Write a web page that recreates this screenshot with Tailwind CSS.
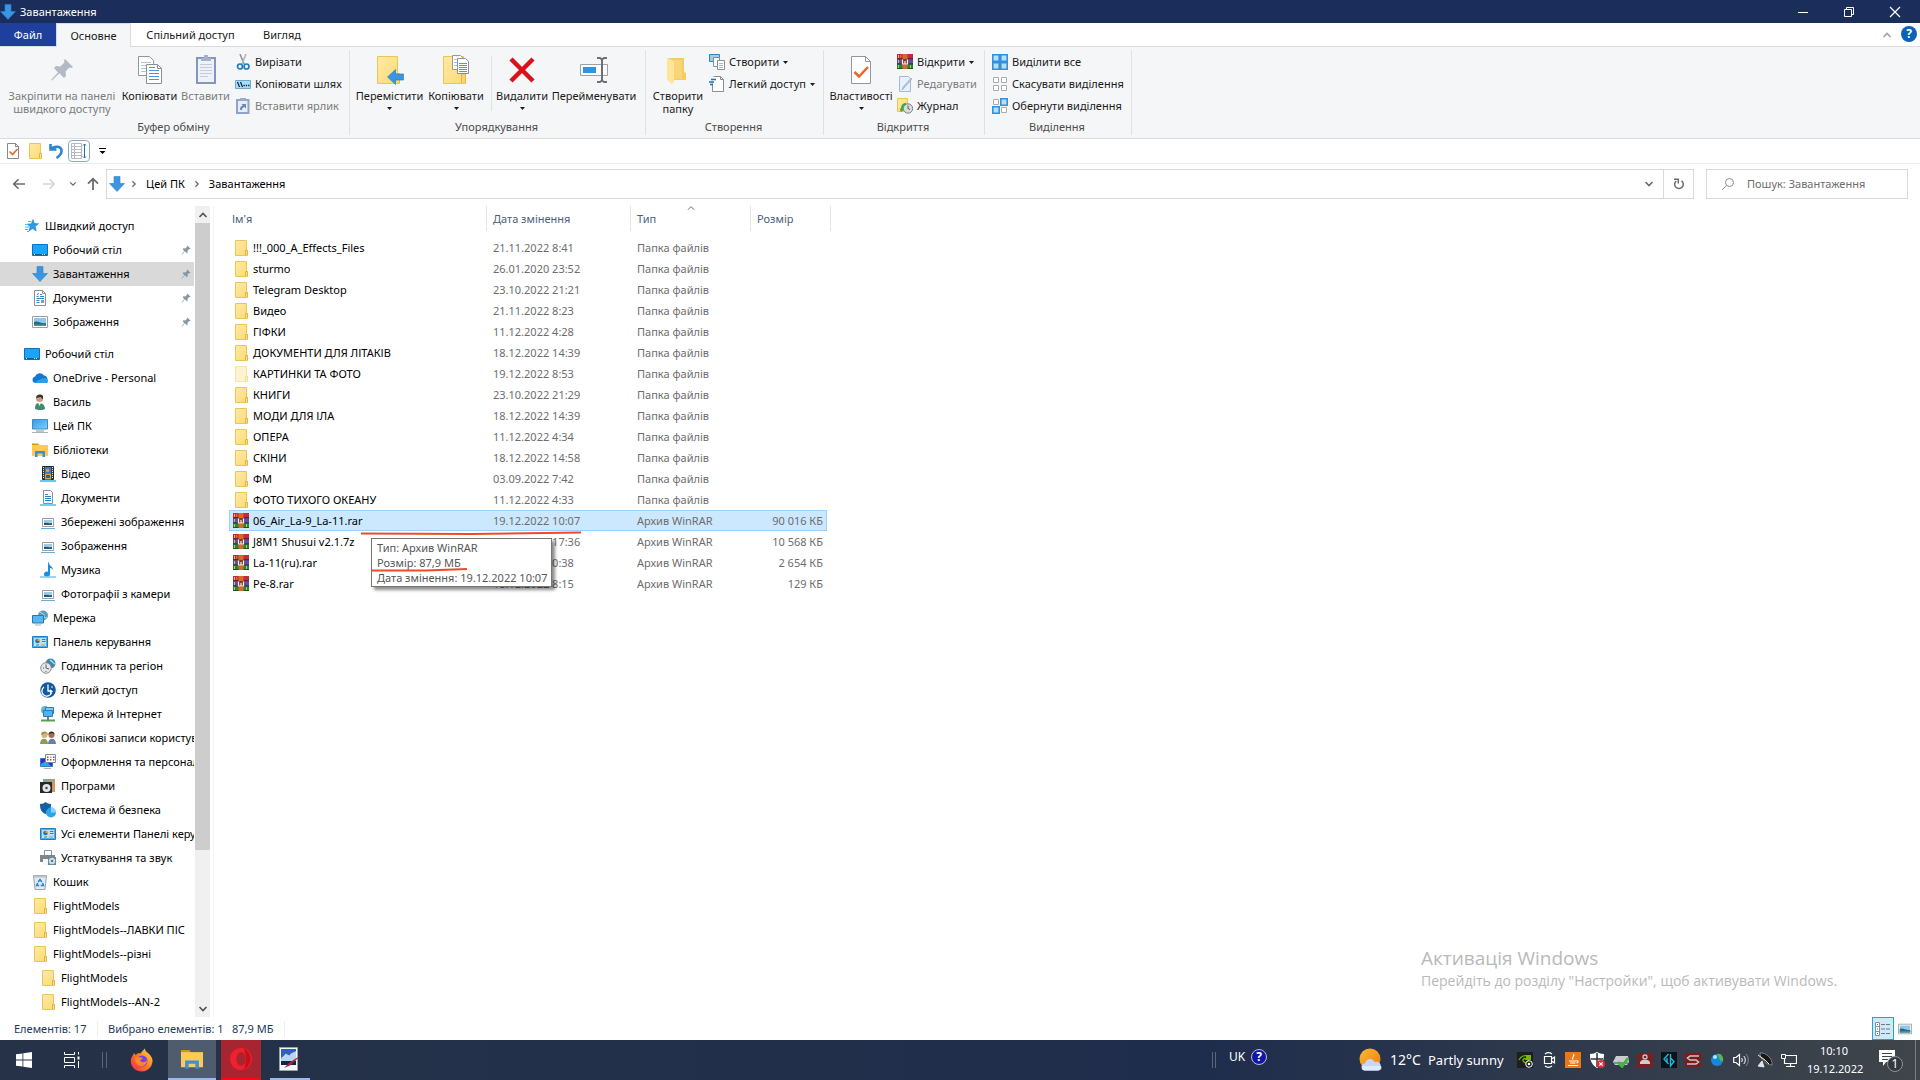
<!DOCTYPE html>
<html lang="uk">
<head>
<meta charset="utf-8">
<title>Завантаження</title>
<script src="https://cdn.jsdelivr.net/npm/@tailwindcss/browser@4"></script>
</head>
<body class="flex h-screen flex-col overflow-hidden bg-white font-['Noto_Sans','Open_Sans',sans-serif] text-[11px] leading-4 text-[#1a1a1a]">
<svg class="absolute size-0" aria-hidden="true">
  <defs>
    <linearGradient id="gf" x1="0" x2="1" y1="0" y2="1"><stop offset="0" stop-color="#ffeaa6"/><stop offset="1" stop-color="#fbda74"/></linearGradient>
    <linearGradient id="gs" x1="0" x2="1" y1="0" y2="1"><stop offset="0" stop-color="#fbb834"/><stop offset="1" stop-color="#f07c12"/></linearGradient>
    <linearGradient id="gx" x1="1" x2="0" y1="0" y2="1"><stop offset="0" stop-color="#ffe23c"/><stop offset=".5" stop-color="#ff7a22"/><stop offset="1" stop-color="#f0245c"/></linearGradient>
    <linearGradient id="gm" x1="0" x2="1" y1="0" y2="1"><stop offset="0" stop-color="#2c9cf0"/><stop offset="1" stop-color="#7fd0fb"/></linearGradient>
  </defs>
  <symbol id="down" viewBox="0 0 16 16"><path d="M5 .5h6v7h4.500L8 15.500.5 7.500H5z" fill="#3a96e2" stroke="#2f7fc6" stroke-width=".6"/></symbol>
  <symbol id="folder" viewBox="0 0 16 16"><path d="M2.500.5h11v10h1v5h-12z" fill="url(#gf)" stroke="#ecc557"/><path d="M12.500 15v-4.500h2V15" fill="#fbe08a" stroke="#e3b640"/></symbol>
  <symbol id="folderl" viewBox="0 0 16 16"><path d="M2.500.5h11v10h1v5h-12z" fill="#fdf3d0" stroke="#f6e4ac"/><path d="M12.500 15v-4.500h2V15" fill="#fdf3d0" stroke="#f3dc98"/></symbol>
  <symbol id="rar" viewBox="0 0 16 16"><path fill="#c22a44" d="M0 0h16v5H0z"/><path fill="#5751a8" d="M0 5h16v5H0z"/><path fill="#218a38" d="M0 10h16v5H0z"/><path fill="#5d1326" d="M0 4.300h16v.9H0z"/><path fill="#241f55" d="M0 9.500h16v.9H0z"/><path fill="#0c4417" d="M0 14.300h16V15H0z"/><path fill="#e2b93c" d="M1 1h1v3H1zM1 6h1v3H1zM1 11h1v3H1zM3.500 1h.6v3h-.6zM13 11h1v3h-1z"/><path fill="#d8682a" d="M5.500 0h5v15h-5z"/><path fill="#8d3a1a" d="M4.600 5h6.800v5.500H4.600z"/><path d="M5.500 5.500v4.500h5V5.500M8 7v3" stroke="#f2f2f2" fill="none" stroke-width="1.200"/></symbol>
  <symbol id="star" viewBox="0 0 16 16"><path d="M9 1.500l1.300 4 4.200.2-3.300 2.800 1 4.500-3.700-2.500L5 13l1.200-4.500L3 6.200l4.300-.4z" fill="#2e9bea" stroke="#1b7cc9" stroke-width=".6"/><path d="M4 3.500h3M1 6.500h3M1 9h4M1 11.500h3M3 13.500h2" stroke="#56b6f2"/></symbol>
  <symbol id="desk" viewBox="0 0 16 16"><path d="M.5 2.500h15v11H.5z" fill="#1ba4fb" stroke="#0b6fbb"/><path d="M1 12.500h14" stroke="#075c9e"/><path d="M2 12.500h2M10 12.500h4" stroke="#cfe9fb" stroke-dasharray="1 1"/></symbol>
  <symbol id="doc" viewBox="0 0 16 16"><path d="M2.500.5h8l3 3v12h-11z" fill="#fff" stroke="#8b8f94"/><path d="M10.500.5v3h3" fill="none" stroke="#8b8f94"/><path d="M4.500 6.500h2M5 4.500l2-1M8 4.500h2M8 6.500h4M4.500 8.500h7.500M4.500 10.500h3M4.500 12.500h3" stroke="#2785c9"/><path d="M9 10h3v3H9z" fill="#7c9db8"/></symbol>
  <symbol id="pic" viewBox="0 0 16 16"><path d="M.5 2.500h15v11H.5z" fill="#fff" stroke="#9aa0a6"/><path d="M2 4h12v8H2z" fill="#8cc8f2"/><path d="M2 8c4-2 6 2 12 1v3H2z" fill="#2f6a65"/><path d="M2 10.500h12V12H2z" fill="#4a8ec0"/></symbol>
  <symbol id="cloud" viewBox="0 0 16 16"><path d="M3.500 13a3.300 3.300 0 01-.4-6.500A5 5 0 0112 5.500 3.900 3.900 0 0113 13z" fill="#1377d4"/><path d="M2.500 13c0 0 6-5 8.500-4.500 3-1.500 5 .5 5 2.500s-1 2-2 2z" fill="#2ba0ea"/></symbol>
  <symbol id="user" viewBox="0 0 16 16"><circle cx="7.500" cy="4.500" r="3.500" fill="#c99f78"/><path d="M4 4C4 0 9.500-.5 11 2v3.500L8.500 3z" fill="#3a3531"/><path d="M3 15c0-4 1-6 4-6s6 2 6 6c-2 1.500-7 1.500-10 0z" fill="#3f8b74"/><path d="M6 9l1.500 3L9 9z" fill="#e8efe9"/></symbol>
  <symbol id="pc" viewBox="0 0 16 16"><path d="M.5 1.500h15v9.500H.5z" fill="url(#gm)" stroke="#4b87b4"/><path d="M4 13h8" stroke="#7b8d9c"/><path d="M0 14.500h16" stroke="#a8b6c2"/></symbol>
  <symbol id="lib" viewBox="0 0 16 16"><path d="M0 1.500h6l1.500 2H0z" fill="#d9930f"/><path d="M0 3h16v11H0z" fill="#fbcb55"/><path d="M3 15V9h10v6h-2.500v-3.500h-5V15z" fill="#3b90d8"/></symbol>
  <symbol id="film" viewBox="0 0 16 16"><path d="M2.500.5h11v13h-11z" fill="#38434d" stroke="#20272e"/><path d="M5 1h6v6H5z" fill="#3d7ac2"/><path d="M5 7.500h6v6H5z" fill="#e0a33d"/><path d="M6 3h3v3H6z" fill="#e89a2c"/><path d="M6 9h4v3H6z" fill="#355c93"/><path d="M3.500 1v12M12.500 1v12" stroke="#dfe5ea" stroke-dasharray="1 1"/><path d="M0 15h16" stroke="#3cb1f2" stroke-width="1.500"/></symbol>
  <symbol id="docl" viewBox="0 0 16 16"><path d="M3.500.5h7l2 2v11h-9z" fill="#fff" stroke="#8b8f94"/><path d="M5 4.500h3M5 6.500h6M5 8.500h6M5 10.500h6" stroke="#2785c9"/><path d="M0 15h16" stroke="#5cb4e6" stroke-width="1.500"/></symbol>
  <symbol id="picl" viewBox="0 0 16 16"><path d="M2.500 4.500h11v8h-11z" fill="#fff" stroke="#9aa0a6"/><path d="M4 6h8v5H4z" fill="#9ccbed"/><path d="M4 9c3-1 5 1 8 0v2H4z" fill="#2f5a65"/><path d="M1 14.500h14" stroke="#5cb4e6"/></symbol>
  <symbol id="note" viewBox="0 0 16 16"><path d="M8.500 0c.5 4 5 4.500 4.500 8.500-.5-2-2-2.500-3-2.500v6a3 2.500 0 11-2-2.300V0z" fill="#1a8fe0"/><path d="M0 15h16" stroke="#5cb4e6" stroke-width="1.200"/></symbol>
  <symbol id="net" viewBox="0 0 16 16"><circle cx="11" cy="5.500" r="5" fill="#5a9fb8"/><path d="M8 2c2 2 4 1 4 4s2 2 3 1" stroke="#bfe3ea" fill="none"/><path d="M.5 5.500h11v7.500H.5z" fill="#55b6f4" stroke="#2b77ad"/><path d="M3 15h6" stroke="#9bb0c0"/></symbol>
  <symbol id="cpl" viewBox="0 0 16 16"><path d="M.5 2.500h15v11H.5z" fill="#b7e1f8" stroke="#1e7dbd"/><path d="M1.500 3.500h13v9h-13z" fill="none" stroke="#4cb1e8"/><circle cx="5.500" cy="7" r="2.300" fill="#2673b8"/><path d="M5.500 7V4.500A2.500 2.500 0 018 7z" fill="#f5a623"/><path d="M10 5.500h3.500M10 7.500h3.500M4 11h3" stroke="#2a88c8"/><path d="M9 11h4" stroke="#f08c1c"/></symbol>
  <symbol id="clock" viewBox="0 0 16 16"><circle cx="10.500" cy="5.500" r="5" fill="#3f86ad"/><path d="M10 2c2 1 3 3 5 4" stroke="#aad6e8" stroke-width="1.500"/><circle cx="6" cy="10" r="5.300" fill="#e4e6e8" stroke="#8b9094"/><path d="M6 6.500V10l3 1M3 10h1M6 13v1" stroke="#596066" fill="none"/></symbol>
  <symbol id="ease" viewBox="0 0 16 16"><circle cx="8" cy="8" r="7.800" fill="#14599f"/><path d="M8 2.500V9h4M4 5a5 5 0 107.500 6M10 8l2 1.500-2 1.500" stroke="#fff" stroke-width="1.300" fill="none"/><circle cx="12" cy="5" r=".8" fill="#fff"/></symbol>
  <symbol id="inet" viewBox="0 0 16 16"><circle cx="5" cy="4" r="4" fill="#69b7d0"/><path d="M5.500 1.500h8v6h-8z" fill="#79cbf8" stroke="#2a7db7"/><path d="M3.500 4.500h9v6h-9z" fill="#4db4f2" stroke="#2a7db7"/><path d="M1 14.500h14" stroke="#48a84b" stroke-width="2"/><path d="M8 11v4" stroke="#777" stroke-width="2"/></symbol>
  <symbol id="users" viewBox="0 0 16 16"><circle cx="4.500" cy="5" r="3" fill="#d4b483"/><path d="M1 5c0-5 7-4.500 7 0L6 3z" fill="#a08c4c"/><circle cx="11.500" cy="5" r="3" fill="#a07050"/><path d="M8.500 4.500c0-4 6-4 6 0L12 3z" fill="#3b2a20"/><path d="M0 14c0-7 8-7 8 0z" fill="#8a9a5d"/><path d="M8 14c0-7 8-7 8 0z" fill="#6880a4"/></symbol>
  <symbol id="pers" viewBox="0 0 16 16"><path d="M.5 4.500h12v8H.5z" fill="#4520d8" stroke="#2b7fc0"/><path d="M1 10l5-3 5 5H1z" fill="#29a6ee"/><path d="M5.500.5h10v8h-10z" fill="#fff" stroke="#7f8b95"/><path d="M7 2.500h1.500v1.500H7zM13 5h1.500v1.500H13z" fill="#e23c3c"/><path d="M10 2.500h1.500v1.500H10z" fill="#f0a020"/><path d="M13 2.500h1.500v1.500H13zM7 5h1.500v1.500H7z" fill="#6a35c8"/><path d="M10 5h1.500v1.500H10z" fill="#2a9d4a"/><path d="M4 14.500h7" stroke="#a9b6c0"/></symbol>
  <symbol id="prog" viewBox="0 0 16 16"><path d="M3 1h12v13H3z" fill="#8ba88e"/><path d="M11 1l4 3v9l-2 1z" fill="#d9955c"/><path d="M0 4h12v11H0z" fill="#26292b"/><circle cx="6.500" cy="10" r="4" fill="#e3e5e6"/><circle cx="6.500" cy="10" r="1.300" fill="#4c5357"/></symbol>
  <symbol id="shield" viewBox="0 0 16 16"><path d="M0 2c3 0 4-1 5.500-2C7 1 8.500 2 11 2c0 6-1 8-5.500 10C1 10 0 7 0 2z" fill="#155fa5"/><circle cx="11" cy="10.500" r="5" fill="#2aa5ec"/><path d="M11 10.500V5.500a5 5 0 015 5z" fill="#8fd4f8"/></symbol>
  <symbol id="print" viewBox="0 0 16 16"><path d="M4.500.5h7v5h-7z" fill="#fff" stroke="#8d9499"/><path d="M0 5h15v7H0z" fill="#7e878d"/><path d="M3 9h5v6H3z" fill="#f4f6f8"/><path d="M8 7h8v8H8z" fill="#6a8496"/><circle cx="12" cy="11" r="3.200" fill="#c8dce8"/><circle cx="12" cy="11" r="1.100" fill="#556"/></symbol>
  <symbol id="bin" viewBox="0 0 16 16"><path d="M1.500 1.500h13l-1.500 14H3z" fill="#e4e9ed" stroke="#9aa5ad"/><path d="M2 2.500h12" stroke="#b8c2ca" stroke-width="2"/><path d="M6.200 8L8 5.500 9.800 8M10.500 9l1 2.500H8.700M7.200 11.500H4.600L5.600 9" stroke="#2484cf" stroke-width="1.500" fill="none"/></symbol>
  <symbol id="pin" viewBox="0 0 12 12"><path d="M7.500.5L11.500 4.500 10.500 5l-.8-.2L7.800 6.800 8 9 7 10 4.700 7.600 1 11.300.5 11 4 7.200 2 5l1-1 2.200.2L7.200 2.300 7 1.300z" fill="#8695a3"/></symbol>
  <symbol id="copy" viewBox="0 0 26 30"><path d="M1.500 1.500h11l4 4v15h-15z" fill="#fff" stroke="#93989d"/><path d="M4 7.500h10M4 10.500h10M4 13.500h10M4 16.500h10" stroke="#a3c5ee"/><path d="M9.500 9.500h11l4 4v15h-15z" fill="#fff" stroke="#8a8f94"/><path d="M20.500 9.500v4h4" fill="none" stroke="#8a8f94"/><path d="M12 15.500h10M12 18.500h10M12 21.500h10M12 24.500h10M12 12.500h6" stroke="#4c93ea"/></symbol>
  <symbol id="paste" viewBox="0 0 22 30"><path d="M2 3h18v25H2z" fill="#eef2f8" stroke="#8297bb" stroke-width="2"/><path d="M6 3h10v3H6zM9 0h4v4H9z" fill="#a3b1c9"/><path d="M5 9.500h12M5 12.500h12M5 15.500h12M5 18.500h12M5 21.500h8" stroke="#c3cddd"/></symbol>
  <symbol id="scis" viewBox="0 0 16 16"><path d="M5 0l4 10" stroke="#8c949b" stroke-width="1.600"/><path d="M11 0L7 10" stroke="#b0b7bd" stroke-width="1.600"/><circle cx="5" cy="12.500" r="2.500" fill="none" stroke="#1e7dc4" stroke-width="1.700"/><circle cx="11.500" cy="12.500" r="2.500" fill="none" stroke="#1e7dc4" stroke-width="1.700"/></symbol>
  <symbol id="path" viewBox="0 0 16 16"><path d="M.5 4.500h15v8H.5z" fill="#a8dcfb" stroke="#6fa9d0"/><path d="M2.500 6l2 5M5.500 6l2 5" stroke="#123" stroke-width="1.200"/><path d="M8.500 9.500h6" stroke="#123" stroke-width="1.500" stroke-dasharray="1.300 1"/></symbol>
  <symbol id="lnk" viewBox="0 0 16 16"><path d="M2 2h11.500v13H2z" fill="#e6edf7" stroke="#8ea4c8" stroke-width="2"/><path d="M5 0h6v3H5z" fill="#9aabc8"/><path d="M5 12c0-3 1-4 3-4.500L6.500 6H11v4.500L9.500 9C8 9.500 7 10 7 12z" fill="#6c86b5"/></symbol>
  <symbol id="bf" viewBox="0 0 28 30"><path d="M1.500 1.500h20v17h2v10h-22z" fill="url(#gf)" stroke="#ecc557"/><path d="M19.500 28V19h4v9" fill="#fad66f" stroke="#e3b640"/></symbol>
  <symbol id="bmove" viewBox="0 0 28 30"><use href="#bf"/><path d="M11.500 22l8-7.500v4.500h8v6h-8v4.500z" fill="#3a96e2" stroke="#2f7fc6" stroke-width=".7"/></symbol>
  <symbol id="bcopy" viewBox="0 0 28 30"><use href="#bf"/><path d="M10.500.5h8l3 3v11h-11z" fill="#fff" stroke="#93989d"/><path d="M12 4.500h7M12 7.500h7M12 10.500h7" stroke="#a3c5ee"/><path d="M15.500 3.500h8l3 3v12h-11z" fill="#fff" stroke="#8a8f94"/><path d="M17 8.500h8M17 10.500h8M17 12.500h8M17 14.500h8M17 16.500h8" stroke="#4c93ea"/></symbol>
  <symbol id="del" viewBox="0 0 28 30"><path d="M3 4l22 22M25 4L3 26" stroke="#da1118" stroke-width="4.500"/></symbol>
  <symbol id="ren" viewBox="0 0 28 30"><path d="M.5 9.500h27v11H.5z" fill="#fff" stroke="#9aa0a5"/><path d="M3 12h13v6H3z" fill="#2f93e6"/><path d="M17 3h3l2 1.500L24 3h3M17 27h3l2-1.500 2 1.500h3M22 4v22" stroke="#6c7074" stroke-width="2" fill="none"/></symbol>
  <symbol id="bnew" viewBox="0 0 28 30"><path d="M4 3h16v14l2 1v7H4z" fill="#f6cb62"/><path d="M3 3l7 3v21l-2 2-5-4z" fill="#fde59a"/><path d="M10 5h8v19h-8z" fill="#f9d675"/></symbol>
  <symbol id="cr" viewBox="0 0 16 16"><path d="M.5.5h10v7H.5z" fill="#9fcde8" stroke="#2f85b8"/><path d="M4.500 3.500h6v9h-6z" fill="#fff" stroke="#8a8f94"/><path d="M8.500 6.500h7v9h-7z" fill="#fff" stroke="#8a8f94"/><path d="M10 9.500h4M10 11.500h4M10 13.500h4" stroke="#9fb8d8"/></symbol>
  <symbol id="ea" viewBox="0 0 16 16"><path d="M4.500.5h7l3 3v12h-11v-8" fill="#fff" stroke="#8a8f94"/><path d="M11.500.5v3h3" fill="none" stroke="#8a8f94"/><path d="M2 3.500h5M0 6h5M1 8.500h3" stroke="#1e6fb5" stroke-width="1.300"/></symbol>
  <symbol id="prop" viewBox="0 0 22 30"><path d="M1.500 1.500h14l5 5v22h-19z" fill="#fff" stroke="#93989d"/><path d="M15.500 1.500v5h5" fill="none" stroke="#93989d"/><path d="M4.500 17l4.500 4.500 9-9.500" stroke="#ee6326" stroke-width="2.500" fill="none"/></symbol>
  <symbol id="edit" viewBox="0 0 16 16"><path d="M2.500.5h9l2 2v13h-11z" fill="#e8f0fa" stroke="#a5b9d6"/><path d="M15 3l-8 9-2 2 1-3 8-9z" fill="#b9c9de" stroke="#8ea4c4" stroke-width=".6"/></symbol>
  <symbol id="hist" viewBox="0 0 16 16"><path d="M.5.500h10v13H.5z" fill="url(#gf)" stroke="#ecc557"/><circle cx="11" cy="10.500" r="4.700" fill="#d9dcde" stroke="#7c8287"/><path d="M11 7.500v3l2 1" stroke="#555" fill="none"/><path d="M9 5c-3 0-5 2-5 6l-1.500-1L4 14l3-2.500L5.800 11C6 8 7 7 9 7z" fill="#37a93c"/></symbol>
  <symbol id="sa" viewBox="0 0 16 16"><path d="M.8.8h6.400v6.400H.8zM8.800.8h6.400v6.400H8.800zM.8 8.800h6.400v6.400H.8zM8.800 8.800h6.400v6.400H8.800z" fill="#b5e0fc" stroke="#3390dd" stroke-width="1.600"/></symbol>
  <symbol id="sn" viewBox="0 0 16 16"><path d="M1.500 1.500h5v5h-5zM9.500 1.500h5v5h-5zM1.500 9.500h5v5h-5zM9.500 9.500h5v5h-5z" fill="#fff" stroke="#a9adb1"/></symbol>
  <symbol id="si" viewBox="0 0 16 16"><path d="M1.500 1.500h5v5h-5zM9.500 9.500h5v5h-5z" fill="#fff" stroke="#a9adb1"/><path d="M8.800.8h6.400v6.400H8.800zM.8 8.800h6.400v6.400H.8z" fill="#b5e0fc" stroke="#3390dd" stroke-width="1.600"/></symbol>
  <symbol id="caret" viewBox="0 0 5 3"><path d="M0 0h5L2.500 3z" fill="currentColor"/></symbol>
  <symbol id="chev" viewBox="0 0 10 10"><path d="M1.500 3L5 6.500 8.500 3" fill="none" stroke="currentColor" stroke-width="1.600"/></symbol>
</svg>

<header class="flex h-[23px] shrink-0 items-center bg-[#1b2d5b] text-white">
  <svg class="size-4"><use href="#down"/></svg>
  <h1 class="ml-1">Завантаження</h1>
  <div class="ml-auto flex">
    <button aria-label="Згорнути" class="flex h-5 w-[46px] items-center justify-center"><svg class="size-3" viewBox="0 0 12 12"><path d="M1 6.500h10" stroke="#fff"/></svg></button>
    <button aria-label="Відновити" class="flex h-5 w-[46px] items-center justify-center"><svg class="size-3" viewBox="0 0 12 12"><path d="M1.500 3.500h7v7h-7zM3.500 3V1.500h7v7H9" fill="none" stroke="#fff"/></svg></button>
    <button aria-label="Закрити" class="flex h-5 w-[46px] items-center justify-center"><svg class="size-3" viewBox="0 0 12 12"><path d="M1 1l10 10M11 1L1 11" stroke="#fff" stroke-width="1.200"/></svg></button>
  </div>
  <span class="w-0.5"></span>
</header>

<nav class="flex h-6 shrink-0 border-b border-[#dadbdc] bg-white" aria-label="Вкладки стрічки">
  <button class="h-[23px] w-14 bg-[#1e3f9b] text-white">Файл</button>
  <button class="relative z-10 h-6 w-[75px] border-x border-t border-[#dadbdc] bg-[#f5f6f7]">Основне</button>
  <button class="h-[23px] w-[119px]">Спільний доступ</button>
  <button class="h-[23px] w-16">Вигляд</button>
  <button aria-label="Згорнути стрічку" class="ml-auto flex w-7 items-center justify-center text-gray-400"><svg class="size-2.5 rotate-180"><use href="#chev"/></svg></button>
  <button aria-label="Довідка" class="mr-[3px] mt-[3px] size-4 rounded-full bg-[#0a63b8] text-[12px] font-bold leading-4 text-white">?</button>
</nav>

<section class="flex h-[92px] shrink-0 border-b border-[#dadbdc] bg-[#f5f6f7] py-[3px]" id="ribbon" aria-label="Стрічка"></section>

<div class="flex h-[25px] shrink-0 items-center border-b border-[#ececec] pl-[5px]">
  <button aria-label="Властивості" class="flex w-[22px]"><svg class="size-4" viewBox="0 0 16 16"><path d="M2.500.5h8l3 3v12h-11z" fill="#fff" stroke="#85898d"/><path d="M10.500.5v3h3" fill="none" stroke="#85898d"/><path d="M4.500 8.500l3 3 5-5.500" fill="none" stroke="#ee6326" stroke-width="1.600"/></svg></button>
  <button aria-label="Нова папка" class="flex w-[22px]"><svg class="size-4"><use href="#folder"/></svg></button>
  <button aria-label="Скасувати" class="flex w-[19px]"><svg class="h-4 w-3.5" viewBox="0 0 14 16"><path d="M1.500 1v5.500h6M2 6C5 2.500 12.500 3 12.500 8c0 3.500-2 5-5 7" fill="none" stroke="#2f84cc" stroke-width="2.600"/></svg></button>
  <button aria-label="Перейменувати" class="flex h-[22px] w-[22px] items-center justify-center rounded-sm border border-[#8ba8cf]"><svg class="size-4" viewBox="0 0 16 16"><path d="M.5.500h10v15H.5zM.5 3.500h10M.5 6.500h10M.5 9.500h10M.5 12.500h10M3.500.5v15" fill="none" stroke="#b4bac0"/><path d="M13.500 1v14M12 2.500L13.500 1 15 2.500M12 13.500l1.500 1.500 1.500-1.500" stroke="#2a6fa8" fill="none"/></svg></button>
  <button aria-label="Настроїти панель швидкого доступу" class="flex w-6 justify-center"><svg class="h-2 w-[7px]" viewBox="0 0 7 8"><path d="M0 1.500h7" stroke="#000"/><path d="M.5 4h6L3.500 7z"/></svg></button>
</div>

<div class="flex h-[42px] shrink-0 items-start pt-[5px] pr-3 text-[#6b6b6b]">
  <div class="flex h-[30px] w-[106px] shrink-0 items-center pl-3">
    <button aria-label="Назад" class="w-[30px]"><svg class="h-3 w-3.5" viewBox="0 0 14 12"><path d="M13 6H2M6.500 1.200L1.700 6l4.800 4.800" fill="none" stroke="currentColor" stroke-width="1.600"/></svg></button>
    <button aria-label="Вперед" class="w-[27px] text-gray-300"><svg class="h-3 w-3.5" viewBox="0 0 14 12"><path d="M1 6h11M7.500 1.200L12.300 6l-4.800 4.800" fill="none" stroke="currentColor" stroke-width="1.600"/></svg></button>
    <button aria-label="Останні розташування" class="w-[18px]"><svg class="size-2"><use href="#chev"/></svg></button>
    <button aria-label="Вгору" class="w-4"><svg class="h-3.5 w-3" viewBox="0 0 12 14"><path d="M6 13V2M1 6.700L6 1.700l5 5" fill="none" stroke="currentColor" stroke-width="1.800"/></svg></button>
  </div>
  <div class="flex h-[30px] min-w-0 grow items-center border border-[#d9d9d9] pl-0.5">
    <svg class="size-4"><use href="#down"/></svg>
    <svg class="ml-[5px] size-2 -rotate-90"><use href="#chev"/></svg>
    <a href="#" class="ml-2 text-black">Цей ПК</a>
    <svg class="ml-2 size-2 -rotate-90"><use href="#chev"/></svg>
    <a href="#" class="ml-2 text-black">Завантаження</a>
    <button aria-label="Попередні розташування" class="ml-auto flex w-7 justify-center"><svg class="size-2.5"><use href="#chev"/></svg></button>
    <button aria-label="Оновити" class="flex h-[28px] w-[30px] items-center justify-center border-l border-[#d9d9d9]"><svg class="size-3" viewBox="0 0 12 12"><path d="M8.500 2.800A4.300 4.300 0 113.200 3M1 1.200h4.300v4.300" fill="none" stroke="currentColor" stroke-width="1.500"/></svg></button>
  </div>
  <label class="ml-3 flex h-[30px] w-[202px] shrink-0 items-center border border-[#d9d9d9] pl-3.5">
    <svg class="size-3.5" viewBox="0 0 14 14"><circle cx="8.500" cy="5.500" r="4" fill="none" stroke="#8a8a8a"/><path d="M5.500 8.500L1 13" stroke="#8a8a8a"/></svg>
    <input type="search" aria-label="Пошук" placeholder="Пошук: Завантаження" class="ml-3 w-40 outline-none placeholder:text-[#6d6d6d]">
  </label>
</div>

<main class="relative flex min-h-0 grow">
  <nav class="w-[195px] shrink-0 overflow-hidden pt-2 text-black" id="tree" aria-label="Область переходів"></nav>
  <div class="flex w-[15px] shrink-0 flex-col items-center bg-[#f0f0f0] text-[#505050]">
    <button aria-label="Вгору" class="flex h-[17px] items-center"><svg class="size-2.5 rotate-180"><use href="#chev"/></svg></button>
    <div class="w-full grow-[627] bg-[#cdcdcd]"></div>
    <div class="w-full grow-[150]"></div>
    <button aria-label="Вниз" class="flex h-[17px] items-center"><svg class="size-2.5"><use href="#chev"/></svg></button>
  </div>
  <div class="relative ml-[3px] grow border-l border-[#f3f3f3] pl-[15px]">
    <table class="w-[598px] table-fixed border-separate border-spacing-0 text-[#6d6d6d]">
      <colgroup><col class="w-[258px]"><col class="w-36"><col class="w-[120px]"><col></colgroup>
      <thead>
        <tr class="h-[25px] text-left text-[#4c607a]">
          <th class="border-r border-[#e5e5e5] pl-[3px] font-normal">Ім'я</th>
          <th class="border-r border-[#e5e5e5] pl-1.5 font-normal">Дата змінення</th>
          <th class="relative border-r border-[#e5e5e5] pl-1.5 font-normal" aria-sort="ascending">Тип<svg class="absolute left-14 top-0 h-1 w-2" viewBox="0 0 8 4"><path d="M.5 4L4 .7 7.500 4" fill="none" stroke="#777"/></svg></th>
          <th class="relative pl-1.5 font-normal">Розмір<span class="absolute inset-y-0 -right-1 w-px bg-[#e5e5e5]"></span></th>
        </tr>
        <tr class="h-1.5"><td></td></tr>
      </thead>
      <tbody id="files"></tbody>
    </table>
    <div role="tooltip" class="absolute left-[157px] top-[332px] w-[181px] border border-[#767676] bg-white px-[5px] py-px leading-[15px] whitespace-nowrap text-[#575757] shadow-[3px_3px_3px_rgba(0,0,0,0.45)]">
      <p>Тип: Архив WinRAR</p><p>Розмір: 87,9 МБ</p><p>Дата змінення: 19.12.2022 10:07</p>
    </div>
    <svg class="absolute left-[147px] top-[325px] h-11 w-[222px]" viewBox="0 0 222 44"><path d="M0 2.500l110 .5 110-1.500M10 39.500h55l41-1.500" fill="none" stroke="#f04a24" stroke-width="2"/></svg>
  </div>
  <div class="absolute right-[74px] bottom-[26px] w-[425px] font-['Open_Sans','Noto_Sans',sans-serif] whitespace-nowrap text-[#b9b9b9]">
    <p class="mb-px text-[19px] leading-6">Активація Windows</p>
    <p class="text-[14px] leading-5">Перейдіть до розділу "Настройки", щоб активувати Windows.</p>
  </div>
</main>

<footer class="flex h-[23px] shrink-0 items-center pl-3.5 text-[#1e395b]">
  <span class="w-[84px] border-r border-[#eeeeee]">Елементів: 17</span>
  <span class="ml-2.5 w-[124px] whitespace-nowrap">Вибрано елементів: 1</span>
  <span class="w-[53px] whitespace-nowrap border-r border-[#eeeeee]">87,9 МБ</span>
  <button aria-label="Таблиця" class="ml-auto flex h-[23px] w-[22px] items-center justify-center border border-[#2a9fdc] bg-[#cdeaf8]"><svg class="size-4" viewBox="0 0 16 16"><path d="M.5 1.500h4v13h-4zM.5 5.500h4M.5 10.500h4" fill="#fff" stroke="#8a8f94"/><path d="M6 3.500h10M6 8h10M6 12.500h10" stroke="#777" stroke-dasharray="4 1"/><path d="M2 3h1v1H2zM2 7.500h1v1H2z" fill="#2a7fc0"/><path d="M2 12h1v1H2z" fill="#d33"/></svg></button>
  <button aria-label="Великі ескізи" class="mr-1 flex h-[23px] w-[22px] items-center justify-center"><svg class="size-3.5"><use href="#pic"/></svg></button>
</footer>

<div class="flex h-10 shrink-0 items-center bg-linear-to-r from-[#253247] via-[#1f2d4c] via-63% to-[#3f454a] text-white" role="toolbar" aria-label="Панель завдань">
  <button aria-label="Пуск" class="flex w-12 justify-center"><svg class="size-4" viewBox="0 0 16 16"><path d="M0 2.300l6.500-.9v6.100H0zM7.300 1.200L16 0v7.500H7.300zM0 8.400h6.500v6.200L0 13.700zM7.300 8.400H16V16l-8.700-1.200z" fill="#fff"/></svg></button>
  <button aria-label="Подання завдань" class="flex w-12 justify-center"><svg class="size-4" viewBox="0 0 16 16"><path d="M.5 0v2.500h10V0M.5 5.500h10v5H.5zM.5 16v-2.500h10V16M14.500 0v2.500M14.500 9v7" fill="none" stroke="#fff"/><path d="M13.500 4.500h2v3h-2z" fill="#fff"/></svg></button>
  <span class="ml-1.5 h-4 w-[5px] border-x border-[#5c6679]"></span>
  <button aria-label="Firefox" class="ml-3 flex w-[49px] pl-[11px]"><svg class="size-6" viewBox="0 0 24 24"><path d="M4 5l1.500 2C7 5.500 9 5 10.500 5.500 12 3 13.500 2 15 .5c0 2 1 3 3 4.500 3 2.500 5 5.500 4.500 9A11 11 0 0112 23.500C5.500 23.500.5 19 .8 12.500 1 9.500 2.500 8.500 4 5z" fill="url(#gx)"/><circle cx="12" cy="13" r="5.500" fill="#7542e5"/><path d="M5 10c3-2 4 0 7-.5 1 .500 0 2-2 2.500 1 3 5 3 7 0 0 4-3 6-6 6-4 0-6-4-6-8z" fill="#ff8a1f"/></svg></button>
  <button aria-label="Провідник" class="flex h-10 w-12 items-center justify-center border-b-2 border-[#9fb8ea] bg-[#4f5b6e]"><svg class="size-[22px]"><use href="#lib"/></svg></button>
  <button aria-label="Opera" class="ml-[5px] flex h-10 w-10 items-center justify-center border-b-2 border-[#f50a12] bg-[#a62530]"><svg class="size-6" viewBox="0 0 24 24"><path fill-rule="evenodd" d="M12 1a11 11 0 110 22 11 11 0 010-22zm0 4c-2.500 0-4.500 3-4.500 7s2 7 4.500 7 4.500-3 4.500-7-2-7-4.500-7z" fill="#f0202c"/><path d="M14 1.500a11 11 0 010 21c4-2 3.500-19 0-21z" fill="#c40f1c"/></svg></button>
  <button aria-label="Редактор зображень" class="ml-[9px] flex h-10 w-10 items-center justify-center border-b-2 border-[#9fb8ea]"><svg class="h-6 w-[22px]" viewBox="0 0 22 24"><path d="M.5.500h18v23H.5z" fill="#f4f6fa" stroke="#9aa3b0"/><path d="M2 2h15v12H2z" fill="#2f62b5"/><path d="M2 13c0-4 3-3 4-6 2-1 3 2 5 1 1-3 4-2 6-4v10H2z" fill="#b9d3f2"/><path d="M2 14h15v4H2z" fill="#10244d"/><path d="M22 8L10 16l-5 5 7-3z" fill="#a32632"/></svg></button>

  <span class="ml-auto h-4 w-1 border-x border-[#5c6679]"></span>
  <span class="ml-[13px] w-[22px] pb-1.5 text-[12px]">UK</span>
  <button aria-label="Довідка мовної панелі" class="mb-1.5 size-4 rounded-full border border-[#b9bfd0] bg-[#1216a8] text-[12px] font-bold leading-3">?</button>
  <button class="ml-[92px] flex h-10 w-[154px] items-center text-[14px] whitespace-nowrap">
    <svg class="size-6" viewBox="0 0 24 24"><circle cx="11" cy="11" r="10.500" fill="url(#gs)"/><path d="M6 22.500a3.500 3.500 0 010-7 5 5 0 019.500-1.500A4.500 4.500 0 0119 22.500z" fill="#c4d9fa"/><path d="M6 22.500c-3 0-3.500-3-2-4.500h18c1 2 0 4.500-3 4.500z" fill="#dfeafd"/></svg>
    <span class="ml-[7px] w-[38px] text-left">12°C</span><span class="text-[13px]">Partly sunny</span>
  </button>
  <div class="flex" id="tray"></div>
  <button class="ml-1.5 w-[54px] shrink-0 text-center leading-[18px] whitespace-nowrap">10:10<br>19.12.2022</button>
  <button aria-label="Центр сповіщень: 1" class="relative ml-[18px] h-6 w-6"><svg class="absolute left-0 top-0.5 h-4 w-4" viewBox="0 0 16 16"><path d="M0 0h16v12H7l-3 4v-4H0z" fill="#fff"/><path d="M3 3.500h10M3 6.500h10M3 9.500h6" stroke="#3d444c"/></svg><span class="absolute left-2 top-2 size-4 rounded-full border border-[#8d9297] bg-[#33383d] text-center text-[12px] leading-[14px]">1</span></button>
  <span class="ml-3 mr-1 h-10 w-px bg-[#7a7f84]"></span>
</div>

<script>
const ico = (id, cls) => `<svg class="${cls}"><use href="#${id}"/></svg>`;
const caret = ico('caret', 'h-[3px] w-[5px] shrink-0');

/* Ribbon */
const big = ([label, id, w, drop, dim]) => `
  <button class="flex shrink-0 flex-col items-center whitespace-nowrap leading-[13px] ${dim ? 'text-[#7b7b7b]' : ''}" style="width:${w}px">
    ${ico(id, 'mt-[5px] mb-1 h-[30px] w-7 shrink-0')}${label}${drop ? `<span class="mt-[5px] flex">${caret}</span>` : ''}
  </button>`;
const small = ([label, id, drop, dim]) => `
  <button class="flex h-[22px] items-center gap-1 whitespace-nowrap ${dim ? 'text-[#7b7b7b]' : ''}">${ico(id, 'size-4 shrink-0')}${label}${drop ? caret : ''}</button>`;
const col = list => `<div class="flex flex-col pl-[3px] pt-px">${list.map(small).join('')}</div>`;
const group = (name, w, body) => `
  <div role="group" aria-label="${name}" class="flex shrink-0 flex-col border-r border-[#e0e1e2]" style="width:${w}px">
    <div class="flex h-[72px]">${body}</div>
    <div class="pr-0.5 text-center leading-4 text-[#4c4c4c]">${name}</div>
  </div>`;
document.getElementById('ribbon').innerHTML =
  group('Буфер обміну', 350, `<span class="w-1 shrink-0"></span>` +
    `<button class="flex w-[116px] shrink-0 flex-col items-center text-center leading-[13px] whitespace-nowrap text-[#7b7b7b]"><svg class="mt-2 mb-[7px] size-6 shrink-0 opacity-60"><use href="#pin"/></svg>Закріпити на панелі<br>швидкого доступу</button>` +
    big(['Копіювати', 'copy', 59]) + big(['Вставити', 'paste', 53, 0, 1]) +
    col([['Вирізати', 'scis'], ['Копіювати шлях', 'path'], ['Вставити ярлик', 'lnk', 0, 1]])) +
  group('Упорядкування', 296, `<span class="w-1.5 shrink-0"></span>` + big(['Перемістити', 'bmove', 67, 1]) + big(['Копіювати', 'bcopy', 66, 1]) +
    `<span class="mt-1.5 ml-0.5 h-[55px] w-px bg-[#e0e1e2]"></span>` + big(['Видалити', 'del', 60, 1]) + big(['Перейменувати', 'ren', 84])) +
  group('Створення', 178, `<span class="w-1 shrink-0"></span>` + big(['Створити<br>папку', 'bnew', 56]) + col([['Створити', 'cr', 1], ['Легкий доступ', 'ea', 1]])) +
  group('Відкриття', 161, `<span class="w-1 shrink-0"></span>` + big(['Властивості', 'prop', 66, 1]) + col([['Відкрити', 'rar', 1], ['Редагувати', 'edit', 0, 1], ['Журнал', 'hist']])) +
  group('Виділення', 147, `<span class="w-1 shrink-0"></span>` + col([['Виділити все', 'sa'], ['Скасувати виділення', 'sn'], ['Обернути виділення', 'si']]));

/* Navigation tree: label, icon, level, pinned */
const tree = [['Швидкий доступ','star',0],['Робочий стіл','desk',1,1],['Завантаження','down',1,1],['Документи','doc',1,1],['Зображення','pic',1,1],null,
['Робочий стіл','desk',0],['OneDrive - Personal','cloud',1],['Василь','user',1],['Цей ПК','pc',1],['Бібліотеки','lib',1],
['Відео','film',2],['Документи','docl',2],['Збережені зображення','picl',2],['Зображення','picl',2],['Музика','note',2],['Фотографії з камери','picl',2],
['Мережа','net',1],['Панель керування','cpl',1],['Годинник та регіон','clock',2],['Легкий доступ','ease',2],['Мережа й Інтернет','inet',2],
['Облікові записи користувачів','users',2],['Оформлення та персоналізація','pers',2],['Програми','prog',2],['Система й безпека','shield',2],
['Усі елементи Панелі керування','cpl',2],['Устаткування та звук','print',2],['Кошик','bin',1],['FlightModels','folder',1],
['FlightModels--ЛАВКИ ПІС','folder',1],['FlightModels--різні','folder',1],['FlightModels','folder',2],['FlightModels--AN-2','folder',2]];
const indent = ['pl-6', 'pl-8', 'pl-10'];
document.getElementById('tree').innerHTML = tree.map(t => !t ? '<div class="h-2"></div>' :
  `<a href="#" class="flex h-6 w-[194px] items-center gap-[5px] overflow-hidden whitespace-nowrap ${indent[t[2]]} ${t[0] === 'Завантаження' ? 'bg-[#d9d9d9]' : ''}">${ico(t[1], 'size-4 shrink-0')}<span>${t[0]}</span>${t[3] ? ico('pin', 'ml-auto mr-[3px] size-2.5 shrink-0') : ''}</a>`).join('');

/* File list */
const F = 'Папка файлів', R = 'Архив WinRAR';
const files = [['!!!_000_A_Effects_Files','21.11.2022 8:41'],['sturmo','26.01.2020 23:52'],['Telegram Desktop','23.10.2022 21:21'],['Видео','21.11.2022 8:23'],
['ГІФКИ','11.12.2022 4:28'],['ДОКУМЕНТИ ДЛЯ ЛІТАКІВ','18.12.2022 14:39'],['КАРТИНКИ ТА ФОТО','19.12.2022 8:53'],['КНИГИ','23.10.2022 21:29'],['МОДИ ДЛЯ ІЛА','18.12.2022 14:39'],
['ОПЕРА','11.12.2022 4:34'],['СКІНИ','18.12.2022 14:58'],['ФМ','03.09.2022 7:42'],['ФОТО ТИХОГО ОКЕАНУ','11.12.2022 4:33'],
['06_Air_La-9_La-11.rar','19.12.2022 10:07','90 016 КБ'],['J8M1 Shusui v2.1.7z','18.12.2022 17:36','10 568 КБ'],['La-11(ru).rar','18.12.2022 0:38','2 654 КБ'],['Pe-8.rar','18.12.2022 8:15','129 КБ']];
document.getElementById('files').innerHTML = files.map(([n, d, s]) => {
  const on = n.startsWith('06');
  return `<tr class="h-[21px] whitespace-nowrap ${on ? 'bg-[#cce8ff] outline outline-[#99d1ff] -outline-offset-1' : ''}">
    <td class="p-0"><div class="flex items-center gap-1 pl-1 text-black">${ico(s ? 'rar' : n.startsWith('КАРТ') ? 'folderl' : 'folder', 'size-4')}${n}</div></td>
    <td class="py-0 pl-1.5">${d}</td><td class="py-0 pl-1.5">${s ? R : F}</td><td class="py-0 pr-1 text-right">${s || ''}</td></tr>`;
}).join('');

/* Notification area */
const tray = [
['NVIDIA','<path d="M0 0h16v16H0z" fill="#1c1f1c"/><path d="M2 8c2-4 6-5 9-4v7c-3 0-5-1-5-3s3-2 3 0" fill="none" stroke="#76b900" stroke-width="1.300"/><path d="M9 3h5v5H9z" fill="#76b900"/><circle cx="12" cy="12" r="3.300" fill="#1c1f1c" stroke="#fff"/><circle cx="12" cy="12" r="1.300" fill="#fff"/>'],
['Камера','<path d="M3.500 4.500h7v7h-7zM10.500 7l3-2v6l-3-2M4 2c2-1.500 5-1.500 7 0M4 14c2 1.500 5 1.500 7 0" fill="none" stroke="#fff" stroke-width="1.200"/>'],
['Java','<path d="M0 0h16v16H0z" fill="#e8781a"/><path d="M8.500 2c2 2-2.500 3-.5 5.500M4 9h7.500M5 11h5.500M3 13.500h10M11.500 8.500c2 0 2 2 0 2.500" stroke="#fff" fill="none" stroke-width="1.200"/>'],
['Безпека','<path d="M1 2c3 0 5-1 7-2 2 1 4 2 7 2 0 7-2 11-7 14C3 13 1 9 1 2z" fill="#fff"/><path d="M8 1v14M2 7h12" stroke="#30353a" stroke-width="1.500"/><circle cx="12" cy="12" r="4" fill="#e32b36"/><path d="M10.300 10.300l3.400 3.400M13.700 10.300l-3.400 3.400" stroke="#fff" stroke-width="1.200"/>'],
['Безпечне вилучення','<path d="M3 4h12l1 6-2 3H2L0 10z" fill="#c8ccd0"/><path d="M1 10h14v2H1z" fill="#83898f"/><path d="M5 10l4 4.500L15 6" stroke="#43b53b" stroke-width="2.800" fill="none"/>'],
['Аудіо','<path d="M0 1h16v14H0z" fill="#7a1f1f"/><circle cx="8" cy="5" r="2" fill="none" stroke="#ccc" stroke-width="1.300"/><path d="M3 12v-2l2-2h6l2 2v2z" fill="#ccc"/>'],
['Armoury','<path d="M0 0h16v16H0z" fill="#0c1216"/><path d="M7.500 2L3 7l4.500 5M9.500 2v12L13 9.500 9.500 6M6 6v4" stroke="#25b6e0" stroke-width="1.400" fill="none"/>'],
['Sonic','<path d="M0 1h16v14H0z" fill="#7e1a1c"/><path d="M14 4H5L2.500 6 5 8h6l2.500 2-2.500 2H2" stroke="#c8c8c8" stroke-width="1.600" fill="none"/>'],
['Мережа','<circle cx="8" cy="8" r="6" fill="#1688dc"/><path d="M8 2c4-1 7 3 6 7-3 1-3-1-4-3z" fill="#57b947"/><circle cx="6" cy="5" r="2" fill="#b8e4fb"/>'],
['Гучність','<path d="M.7 5.500H3l3.500-3v11l-3.500-3H.7z" fill="none" stroke="#fff" stroke-width="1.200"/><path d="M8.500 6c1 1 1 3 0 4M10.800 4c2 2 2 6 0 8" fill="none" stroke="#fff"/><path d="M13 2c3 3 3 9 0 12" fill="none" stroke="#889" />'],
['Супутник','<path d="M3 1c6-1 13 6 12 12C9 13 3 7 3 1z" fill="#171717" stroke="#999" stroke-width=".8"/><path d="M1 3l7 5 4 4M5 9l-4 5 6 1z" fill="#e4e4e4" stroke="#e4e4e4"/>'],
['Ethernet','<path d="M3.500 3.500h12v8h-12zM9.500 11.500v3M5 14.500h9" fill="none" stroke="#fff" stroke-width="1.200"/><path d="M.5 2.500h4v4h-4z" fill="#3d444c" stroke="#fff"/>']];
document.getElementById('tray').innerHTML = tray.map(([n, p]) => `<button aria-label="${n}" class="flex w-6 justify-center"><svg class="size-4" viewBox="0 0 16 16">${p}</svg></button>`).join('');
</script>
</body>
</html>
